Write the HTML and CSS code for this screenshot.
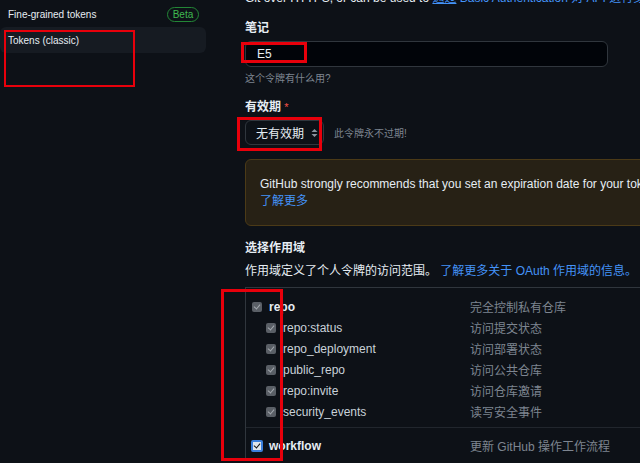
FILE: index.html
```html
<!DOCTYPE html>
<html lang="zh-CN">
<head>
<meta charset="utf-8">
<title>Personal access tokens (classic)</title>
<link rel="stylesheet" href="styles.css">
</head>
<body>
<div class="page">
  <aside class="sidebar">
    <div class="nav-item"><span>Fine-grained tokens</span><span class="badge">Beta</span></div>
    <div class="nav-item active"><span>Tokens (classic)</span></div>
  </aside>

  <main class="main">
    <p class="intro">Git over HTTPS, or can be used to <a class="link"><span class="ul">通过</span> Basic Authentication 对 API 进行身份验证</a>。</p>

    <div class="label label-note">笔记</div>
    <div class="input">E5</div>
    <p class="hint">这个令牌有什么用?</p>

    <div class="label label-exp">有效期 <span class="req">*</span></div>
    <div class="expiry-row">
      <div class="select">
        <span>无有效期</span>
        <svg class="arrows" width="7" height="10" viewBox="0 0 7 10"><path d="M3.5 1 L6.5 4 L0.5 4 Z M3.5 9 L6.5 6 L0.5 6 Z" fill="#8b949e"/></svg>
      </div>
      <span class="note">此令牌永不过期!</span>
    </div>

    <div class="warning">
      <p>GitHub strongly recommends that you set an expiration date for your token to help keep your information secure.</p>
      <a class="link">了解更多</a>
    </div>

    <div class="label label-scope">选择作用域</div>
    <p class="desc">作用域定义了个人令牌的访问范围。 <a class="link">了解更多关于 OAuth 作用域的信息。</a></p>

    <div class="scopes">
      <div class="group">
        <div class="row">
          <div class="name top"><span class="cb"></span><b>repo</b></div>
          <div class="sdesc">完全控制私有仓库</div>
        </div>
        <div class="row">
          <div class="name sub"><span class="cb"></span>repo:status</div>
          <div class="sdesc">访问提交状态</div>
        </div>
        <div class="row">
          <div class="name sub"><span class="cb"></span>repo_deployment</div>
          <div class="sdesc">访问部署状态</div>
        </div>
        <div class="row">
          <div class="name sub"><span class="cb"></span>public_repo</div>
          <div class="sdesc">访问公共仓库</div>
        </div>
        <div class="row">
          <div class="name sub"><span class="cb"></span>repo:invite</div>
          <div class="sdesc">访问仓库邀请</div>
        </div>
        <div class="row">
          <div class="name sub"><span class="cb"></span>security_events</div>
          <div class="sdesc">读写安全事件</div>
        </div>
      </div>
      <div class="group group-wf">
        <div class="row">
          <div class="name top"><span class="cb cb-on"></span><b>workflow</b></div>
          <div class="sdesc">更新 GitHub 操作工作流程</div>
        </div>
      </div>
    </div>
  </main>

  <div class="mark mark-side"></div>
  <div class="mark mark-input"></div>
  <div class="mark mark-select"></div>
  <div class="mark mark-scopes"></div>
</div>
</body>
</html>
```

FILE: styles.css
```css
* { box-sizing: border-box; margin: 0; padding: 0; }

html, body {
  background: #0d1117;
}

body {
  font-family: "Liberation Sans", "Noto Sans CJK SC", sans-serif;
  font-size: 12px;
  color: #e6edf3;
  overflow: hidden;
}

.page {
  position: relative;
  width: 640px;
  height: 463px;
  overflow: hidden;
  display: flex;
  align-items: flex-start;
}

/* sidebar */
.sidebar {
  flex: none;
  width: 206px;
  padding-top: 1px;
}

.nav-item {
  height: 26px;
  display: flex;
  align-items: center;
  justify-content: space-between;
  padding: 0 7px 0 8px;
  font-size: 10px;
  color: #e6edf3;
  border-radius: 6px;
}

.nav-item.active {
  background: #161b22;
}

.badge {
  display: inline-flex;
  align-items: center;
  justify-content: center;
  width: 32px;
  height: 15px;
  border: 1px solid #238636;
  border-radius: 8px;
  color: #3fb950;
  font-size: 10px;
}

/* main column */
.main {
  flex: none;
  width: 520px;
  margin-left: 39px;
}

.link {
  color: #4493f8;
  text-decoration: none;
}

.ul { text-decoration: underline; }

.intro {
  margin-top: -11px;
  line-height: 18px;
  white-space: nowrap;
}

.label {
  font-weight: 700;
  line-height: 18px;
}

.label-note { margin-top: 12px; }
.label-exp { margin-top: 11px; }
.label-scope { margin-top: 13px; }

.req {
  color: #f85149;
  font-weight: 400;
  font-size: 11px;
}

.input {
  margin-top: 4px;
  width: 363px;
  height: 26px;
  padding-left: 11px;
  display: flex;
  align-items: center;
  background: #010409;
  border: 1px solid #30363d;
  border-radius: 6px;
  color: #e6edf3;
}

.hint {
  margin-top: 4px;
  line-height: 16px;
  font-size: 10px;
  color: #7d8590;
}

.expiry-row {
  margin-top: 4px;
  display: flex;
  align-items: center;
  gap: 10px;
}

.select {
  width: 79px;
  height: 25px;
  display: flex;
  align-items: center;
  justify-content: space-between;
  padding: 0 5px 0 10px;
  border: 1px solid #30363d;
  border-radius: 6px;
  background: #0d1117;
  color: #e6edf3;
}

.note {
  font-size: 10px;
  color: #7d8590;
}

.warning {
  margin-top: 14px;
  width: 520px;
  padding: 16px 0 15px 14px;
  background: #272115;
  border: 1px solid #4b3a17;
  border-radius: 6px;
  line-height: 17px;
  white-space: nowrap;
}

.warning .link { display: block; }

.desc {
  margin-top: 5px;
  line-height: 18px;
  white-space: nowrap;
}

/* scopes table */
.scopes {
  margin-top: 7px;
  border-top: 1px solid #30363d;
  border-left: 1px solid #30363d;
}

.group {
  padding: 8px 0 5px 6px;
}

.group-wf {
  border-top: 1px solid #21262d;
  padding-top: 7px;
}

.row {
  display: flex;
  align-items: center;
  height: 21px;
}

.name {
  display: flex;
  align-items: center;
  color: #c9d1d9;
}

.name.top { width: 218px; color: #e6edf3; }
.name.sub { width: 204px; margin-left: 14px; }

.name b { font-weight: 700; }

.cb {
  flex: none;
  width: 10px;
  height: 10px;
  margin-right: 7px;
  border-radius: 2px;
  background: #5a5f66;
  position: relative;
}

.cb::after {
  content: "";
  position: absolute;
  left: 3px;
  top: 1px;
  width: 3px;
  height: 5px;
  border-right: 1.5px solid #a3a8ae;
  border-bottom: 1.5px solid #a3a8ae;
  transform: rotate(40deg);
}

.cb-on {
  width: 12px;
  height: 12px;
  margin-left: -1px;
  margin-right: 6px;
  background: #dfe5ec;
  border: 2px solid #3b7fdc;
  border-radius: 2px;
}

.cb-on::after {
  left: 2px;
  top: 0px;
  border-color: #111;
}

.sdesc {
  color: #7d8590;
  white-space: nowrap;
}

/* red annotation boxes drawn over the screenshot */
.mark {
  position: absolute;
  border: 3px solid #e8000b;
}

.mark-side { left: 4px; top: 30px; width: 131px; height: 57px; border-width: 2px; }
.mark-input { left: 241px; top: 42px; width: 66px; height: 21px; }
.mark-select { left: 237px; top: 117px; width: 85px; height: 34px; }
.mark-scopes { left: 221px; top: 289px; width: 62px; height: 172px; }
```
